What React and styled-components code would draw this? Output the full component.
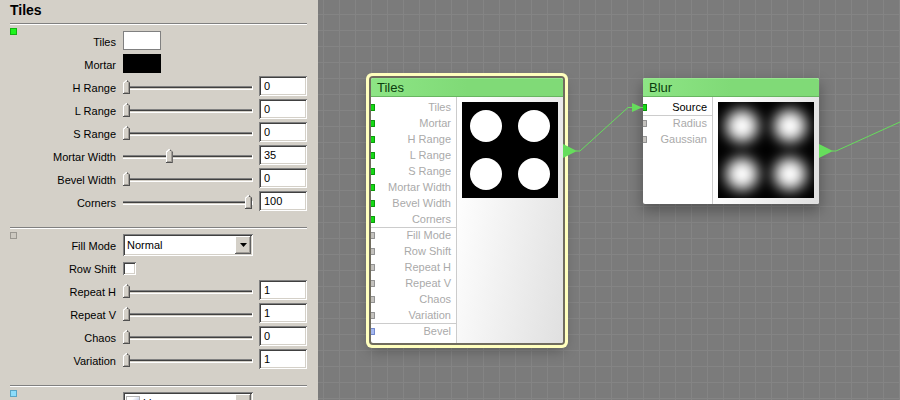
import { useState } from 'react';
import styled, { createGlobalStyle } from 'styled-components';

const GlobalStyle = createGlobalStyle`
    * {
        box-sizing: border-box;
    }

    body {
        margin: 0;
        font-family: "Liberation Sans", Arial, sans-serif;
        font-size: 11px;
    }

    input, select {
        font-family: inherit;
        font-size: inherit;
    }
`

const sunken = `
    border: none;
    border-radius: 0;
    background-color: #fff;
    box-shadow: inset 1px 1px #808080, inset -1px -1px #fff, inset 2px 2px #404040, inset -2px -2px #d4d0c8;
`

const Page = styled.main`
    display: flex;
    height: 100vh;
    overflow: hidden;
`

const Panel = styled.aside`
    flex: none;
    width: 318px;
    padding: 0 11px 0 10px;
    overflow: hidden;
    background-color: #d4d0c8;
    color: #000;
`

const PanelTitle = styled.h1`
    margin: 0;
    padding: 2px 0 5px;
    font-size: 14px;
    line-height: 16px;
`

const Section = styled.section`
    display: grid;
    grid-template-columns: 7px 1fr;
    align-items: start;
    padding-bottom: 13px;
    border-top: 1px solid #808080;
    box-shadow: inset 0 1px #fff;
`

const Marker = styled.span`
    height: 7px;
    margin-top: 4px;
    border: 1px solid ${(props) => props.$border};
    background-color: ${(props) => props.$fill};
`

const Rows = styled.div`
    padding-top: 6px;
`

const Row = styled.div`
    display: grid;
    grid-template-columns: 1fr 130px 48px;
    column-gap: 6px;
    align-items: start;
    height: 23px;
`

const Label = styled.label`
    padding: 5px 1px 0 0;
    line-height: 14px;
    text-align: right;
    white-space: nowrap;
`

const Swatch = styled.button`
    width: 38px;
    height: 19px;
    margin-top: 1px;
    padding: 0;
    border: 1px solid ${(props) => props.$border};
    background-color: ${(props) => props.$color};
`

const Range = styled.input`
    appearance: none;
    width: 100%;
    height: 14px;
    margin: 5px 0 0;
    background: none;

    &::-webkit-slider-runnable-track {
        height: 4px;
        background: linear-gradient(#808080 1px, #404040 1px 2px, #d4d0c8 2px 3px, #fff 3px);
        border-right: 1px solid #fff;
    }

    &::-webkit-slider-thumb {
        appearance: none;
        width: 7px;
        height: 14px;
        margin-top: -6px;
        background:
            linear-gradient(135deg, #fff 3px, transparent 3px) 0 0 / 4px 4px no-repeat,
            linear-gradient(225deg, #606060 3px, transparent 3px) 100% 0 / 4px 4px no-repeat,
            #d4d0c8;
        box-shadow: inset -1px -1px #505050, inset 1px 0 #fff, inset -2px -2px #a09c96;
        clip-path: polygon(0 3px, 3px 0, 4px 0, 7px 3px, 7px 100%, 0 100%);
    }
`

const NumberBox = styled.input`
    ${sunken}
    width: 100%;
    height: 20px;
    padding: 0 5px;
`

const CheckBox = styled.input`
    ${sunken}
    appearance: none;
    width: 13px;
    height: 13px;
    margin: 5px 0 0;

    &:checked {
        background-image: linear-gradient(#000, #000);
        background-size: 5px 5px;
        background-position: center;
        background-repeat: no-repeat;
    }
`

const SelectWrap = styled.div`
    display: grid;
    align-items: center;

    > * {
        grid-area: 1 / 1;
    }
`

const Select = styled.select`
    ${sunken}
    appearance: none;
    width: 100%;
    height: 22px;
    padding: 0 20px 0 ${(props) => (props.$icon ? '20px' : '4px')};
    color: #000;
`

const SelectButton = styled.span`
    display: grid;
    place-items: center;
    justify-self: end;
    width: 16px;
    height: 18px;
    margin-right: 2px;
    background-color: #d4d0c8;
    box-shadow: inset -1px -1px #606060, inset 1px 1px #fff, inset -2px -2px #a09c96;
    pointer-events: none;
`

const GradientIcon = styled.span`
    width: 14px;
    height: 15px;
    margin-left: 3px;
    border: 1px solid #b4b4b4;
    background: linear-gradient(135deg, #fff 30%, #7b93cf);
    pointer-events: none;
`

const Canvas = styled.section`
    position: relative;
    flex: 1;
    overflow: hidden;
    background-color: #7b7b7b;
    background-image: linear-gradient(#848484 1px, transparent 1px), linear-gradient(90deg, #848484 1px, transparent 1px);
    background-size: 16px 16px;
    background-position: 5px 14px;
`

const Wires = styled.svg`
    position: absolute;
    inset: 0;
    width: 100%;
    height: 100%;
    pointer-events: none;
`

const NodeBox = styled.article`
    position: absolute;
    left: ${(props) => props.$x}px;
    top: ${(props) => props.$y}px;
    width: ${(props) => props.$width}px;
    border-radius: 2px;
    background-color: #fff;
    box-shadow: ${(props) => (props.$selected ? '0 0 0 2px #706c5e, 0 0 0 5px #ffffbe, ' : '')}0 6px 14px 1px rgba(0, 0, 0, 0.3);
`

const NodeTitle = styled.h2`
    margin: 0;
    padding: 0 6px;
    border-top: 1px solid #97e88f;
    border-bottom: 1px solid #68b661;
    border-radius: 2px 2px 0 0;
    background: linear-gradient(90deg, #8de585, #80da77 50%);
    color: #0b3d0e;
    font-size: 13px;
    font-weight: normal;
    line-height: 17px;
`

const NodeBody = styled.div`
    display: flex;
`

const Inputs = styled.ul`
    flex: 1;
    margin: 0;
    padding: 2px 0 4px;
    border-right: 1px solid #ccc;
    list-style: none;
`

const InputRow = styled.li`
    display: flex;
    align-items: center;
    justify-content: space-between;
    height: 16px;
    padding-right: 5px;
    color: ${(props) => (props.$active ? '#000' : '#aaa')};
    line-height: 16px;
    white-space: nowrap;
    box-shadow: ${(props) => (props.$divided ? 'inset 0 1px #ccc' : 'none')};
`

const pinColors = {
    green: ['#14d814', '#0a9a0a'],
    gray: ['#c4c2be', '#929292'],
    blue: ['#a5b8f0', '#7388cc'],
};

const Pin = styled.span`
    width: 4px;
    height: 7px;
    border: 1px solid ${(props) => pinColors[props.$kind][1]};
    border-left: none;
    border-radius: 0 1px 1px 0;
    background-color: ${(props) => pinColors[props.$kind][0]};
`

const PreviewPane = styled.div`
    padding: 5px 5px 6px;
    border-radius: 0 0 2px 0;
    background: linear-gradient(100deg, #fff 10%, #e0e0e0);
`

const Preview = styled.svg`
    display: block;
    width: 96px;
    height: 96px;
`

const WIRE = '#66dd5c';

const colorRows = [
    { name: 'Tiles', color: '#fff', border: '#808080' },
    { name: 'Mortar', color: '#000', border: '#000' },
];

const rangeRows = [
    { name: 'H Range', value: 0 },
    { name: 'L Range', value: 0 },
    { name: 'S Range', value: 0 },
    { name: 'Mortar Width', value: 35 },
    { name: 'Bevel Width', value: 0 },
    { name: 'Corners', value: 100 },
];

const patternRows = [
    { name: 'Repeat H', value: 1, min: 1 },
    { name: 'Repeat V', value: 1, min: 1 },
    { name: 'Chaos', value: 0 },
    { name: 'Variation', value: 1, min: 1 },
];

const tilesInputs = [
    { name: 'Tiles', kind: 'green' },
    { name: 'Mortar', kind: 'green' },
    { name: 'H Range', kind: 'green' },
    { name: 'L Range', kind: 'green' },
    { name: 'S Range', kind: 'green' },
    { name: 'Mortar Width', kind: 'green' },
    { name: 'Bevel Width', kind: 'green' },
    { name: 'Corners', kind: 'green' },
    { name: 'Fill Mode', kind: 'gray', divided: true },
    { name: 'Row Shift', kind: 'gray' },
    { name: 'Repeat H', kind: 'gray' },
    { name: 'Repeat V', kind: 'gray' },
    { name: 'Chaos', kind: 'gray' },
    { name: 'Variation', kind: 'gray' },
    { name: 'Bevel', kind: 'blue', divided: true },
];

const blurInputs = [
    { name: 'Source', kind: 'green', active: true },
    { name: 'Radius', kind: 'gray', divided: true },
    { name: 'Gaussian', kind: 'gray' },
];

function SliderRow({ name, value: initial, min = 0 }) {
    const [value, setValue] = useState(initial);
    const id = name.toLowerCase().replace(' ', '-');
    const handleChange = (e) => setValue(e.target.value);

    return (
        <Row>
            <Label htmlFor={id}>{name}</Label>
            <Range type="range" id={id} min={min} max="100" value={value} onChange={handleChange} />
            <NumberBox type="text" aria-label={`${name} value`} value={value} onChange={handleChange} />
        </Row>
    );
}

function SelectRow({ name, hidden, options, icon }) {
    const id = name.toLowerCase().replace(' ', '-');

    return (
        <Row>
            {hidden ? <span /> : <Label htmlFor={id}>{name}</Label>}
            <SelectWrap>
                <Select id={id} aria-label={name} $icon={icon}>
                    {options.map((option) => <option key={option}>{option}</option>)}
                </Select>
                {icon && <GradientIcon />}
                <SelectButton>
                    <svg width="7" height="4" viewBox="0 0 7 4">
                        <path d="M0 0H7L3.5 4Z" fill="#000" />
                    </svg>
                </SelectButton>
            </SelectWrap>
        </Row>
    );
}

function Node({ title, inputs, x, y, width, selected, children }) {
    return (
        <NodeBox $x={x} $y={y} $width={width} $selected={selected}>
            <NodeTitle>{title}</NodeTitle>
            <NodeBody>
                <Inputs>
                    {inputs.map((input) => (
                        <InputRow key={input.name} $active={input.active} $divided={input.divided}>
                            <Pin $kind={input.kind} />
                            {input.name}
                        </InputRow>
                    ))}
                </Inputs>
                <PreviewPane>
                    <Preview viewBox="0 0 96 96">
                        <rect width="96" height="96" fill="#000" />
                        {children}
                    </Preview>
                </PreviewPane>
            </NodeBody>
        </NodeBox>
    );
}

function Dots() {
    return (
        <>
            <circle cx="24" cy="24" r="16" />
            <circle cx="72" cy="24" r="16" />
            <circle cx="24" cy="72" r="16" />
            <circle cx="72" cy="72" r="16" />
        </>
    );
}

export default function App() {
    const [rowShift, setRowShift] = useState(false);

    return (
        <>
            <GlobalStyle />
            <Page>
                <Panel>
                    <PanelTitle>Tiles</PanelTitle>
                    <Section>
                        <Marker $fill="#1ef51e" $border="#12b312" />
                        <Rows>
                            {colorRows.map((row) => (
                                <Row key={row.name}>
                                    <Label htmlFor={`color-${row.name}`}>{row.name}</Label>
                                    <Swatch type="button" id={`color-${row.name}`} $color={row.color} $border={row.border} />
                                </Row>
                            ))}
                            {rangeRows.map((row) => <SliderRow key={row.name} {...row} />)}
                        </Rows>
                    </Section>
                    <Section>
                        <Marker $fill="#ccc8c0" $border="#999690" />
                        <Rows>
                            <SelectRow name="Fill Mode" options={['Normal']} />
                            <Row>
                                <Label htmlFor="row-shift">Row Shift</Label>
                                <CheckBox
                                    type="checkbox"
                                    id="row-shift"
                                    checked={rowShift}
                                    onChange={(e) => setRowShift(e.target.checked)}
                                />
                            </Row>
                            {patternRows.map((row) => <SliderRow key={row.name} {...row} />)}
                        </Rows>
                    </Section>
                    <Section>
                        <Marker $fill="#8cdcfa" $border="#5aa5c4" />
                        <Rows>
                            <SelectRow name="Bevel" hidden icon options={['Linear']} />
                        </Rows>
                    </Section>
                </Panel>
                <Canvas>
                    <Node title="Tiles" inputs={tilesInputs} x={53} y={78} width={192} selected>
                        <g fill="#fff">
                            <Dots />
                        </g>
                    </Node>
                    <Node title="Blur" inputs={blurInputs} x={325} y={78} width={176}>
                        <filter id="soften" x="-50%" y="-50%" width="200%" height="200%" colorInterpolationFilters="sRGB">
                            <feGaussianBlur stdDeviation="7" />
                        </filter>
                        <g fill="#fff" filter="url(#soften)">
                            <Dots />
                        </g>
                    </Node>
                    <Wires>
                        <g fill="none" stroke={WIRE}>
                            <path d="M258 151H262L310 107.5H325" />
                            <path d="M514 151H518L882 -14" />
                        </g>
                        <g fill={WIRE}>
                            <path d="M245 144L259 151L245 158Z" />
                            <path d="M314 103L324 107.5L314 112Z" />
                            <path d="M501 144L515 151L501 158Z" />
                        </g>
                    </Wires>
                </Canvas>
            </Page>
        </>
    );
}
